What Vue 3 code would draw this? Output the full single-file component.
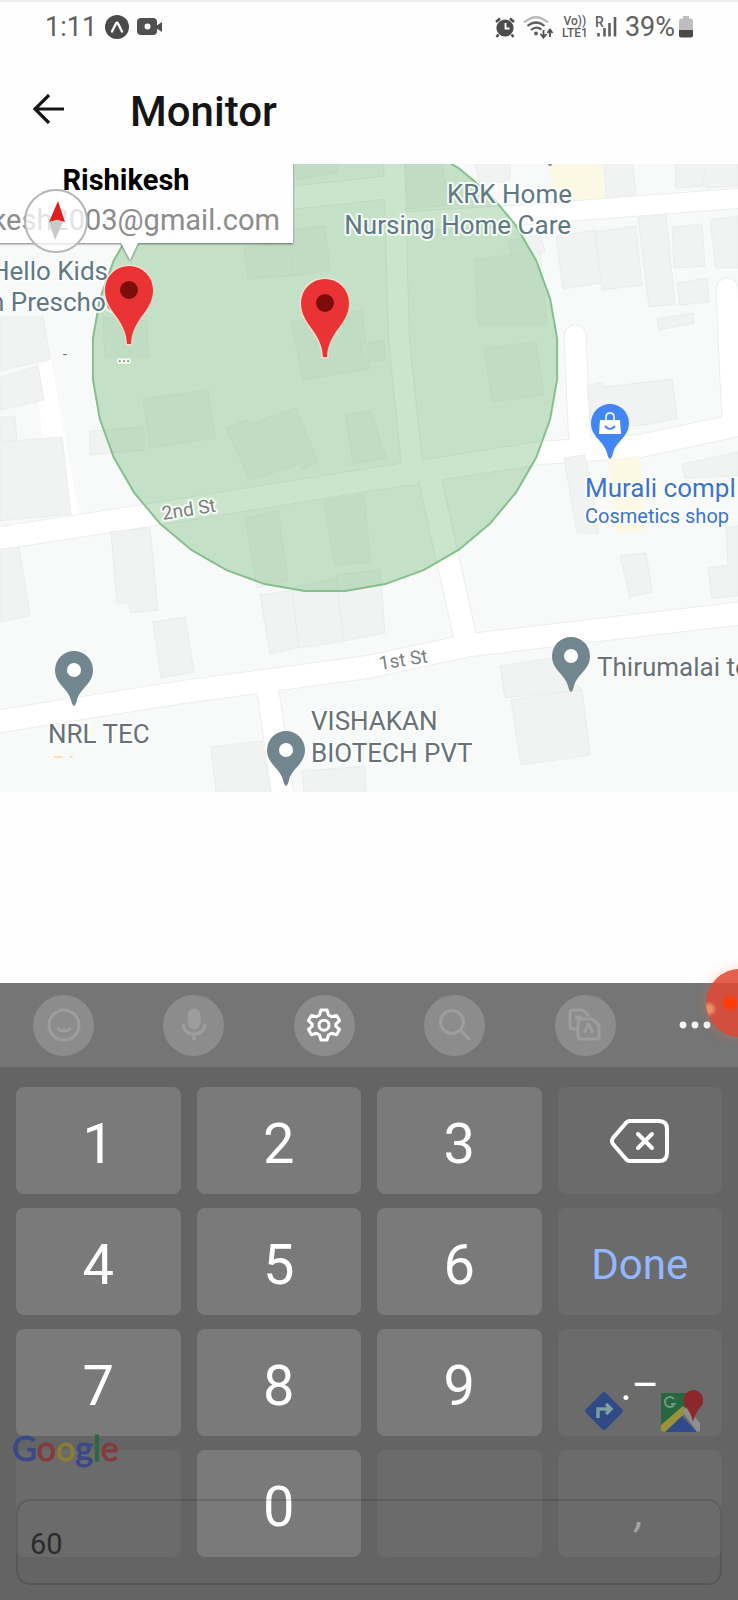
<template>
    <div class="screen">
        <div class="status-bar">
            <div class="status-left">
                <span class="clock">1:11</span>
                <svg width="24" height="24" viewBox="0 0 24 24">
                    <circle cx="12" cy="12" r="12" fill="#4a4a4a" />
                    <path d="M7 16.5 11 8.5Q12 7 13 8.5L17 16.5" fill="none" stroke="#fff" stroke-width="2.4" stroke-linecap="round" />
                </svg>
                <svg width="26" height="18" viewBox="0 0 26 18">
                    <rect x="0" y="0" width="20" height="17" rx="4" fill="#505050" />
                    <path d="M19 8 25 4V14L19 10Z" fill="#505050" />
                    <circle cx="10.5" cy="8.5" r="3" fill="#fff" />
                </svg>
            </div>
            <div class="status-right">
                <svg width="20" height="21" viewBox="0 0 20 21">
                    <circle cx="10" cy="11" r="8.6" fill="#4c4c4c" />
                    <path d="M1 5 5 1.5M19 5 15 1.5M3.5 17.5 1.5 20M16.5 17.5 18.5 20" stroke="#4c4c4c" stroke-width="2.4" />
                    <path d="M10.5 6V11.5H14.5" fill="none" stroke="#fff" stroke-width="1.8" />
                </svg>
                <svg width="31" height="23" viewBox="0 0 31 23">
                    <path d="M1 6.5Q13 -4 25 6.5" fill="none" stroke="#b8b8b8" stroke-width="2.2" />
                    <path d="M4.5 10Q13 3 21.5 10M8 14Q13 9.5 18.5 13.5" fill="none" stroke="#606060" stroke-width="2.2" />
                    <circle cx="13" cy="17.5" r="2" fill="#606060" />
                    <path d="M20.5 14V21M17.5 18 20.5 21.5 23.5 18M27 21V14M24.5 17 27 13.5 29.5 17" fill="none" stroke="#505050" stroke-width="1.8" />
                </svg>
                <span class="volte"><span>Vo))</span><span>LTE1</span></span>
                <span class="signal">
                    <span class="roaming">R</span>
                    <svg width="21" height="20" viewBox="0 0 21 20">
                        <path d="M2.5 16V19.5M8.5 11V19.5M13.5 6V19.5M19 0V19.5" stroke="#606060" stroke-width="2.6" />
                    </svg>
                </span>
                <span class="clock percent">39%</span>
                <svg width="14" height="22" viewBox="0 0 14 22">
                    <path d="M4 0H10V2.5H12Q14 2.5 14 5V14H0V5Q0 2.5 2 2.5H4Z" fill="#bdbdbd" />
                    <path d="M0 14H14V19.5Q14 21.5 12 21.5H2Q0 21.5 0 19.5Z" fill="#484848" />
                </svg>
            </div>
        </div>

        <header class="header">
            <button class="back" aria-label="Back">
                <svg width="32" height="30" viewBox="0 0 32 30">
                    <path d="M16 1 2 15 16 29M2 15H31" fill="none" stroke="#151515" stroke-width="3.2" />
                </svg>
            </button>
            <h1>Monitor</h1>
        </header>

        <svg class="map" viewBox="0 164 738 628" role="img" aria-label="Map">
            <rect x="0" y="164" width="738" height="628" fill="#f7faf9" />

            <g class="road-edge">
                <path v-for="road in roads" :key="road.d" :d="road.d" :stroke-width="road.width + 2" />
            </g>
            <g class="road">
                <path v-for="road in roads" :key="road.d" :d="road.d" :stroke-width="road.width" />
            </g>
            <polygon points="36,366 51,360 79,514 71,515 63,438 42,438" fill="#fff" />
            <polygon v-for="points in buildings" :key="points" :points="points" class="building" />
            <polygon v-for="points in shops" :key="points" :points="points" fill="#fdf8e4" />
            <ellipse cx="58" cy="757" rx="5" ry="1" fill="#fbdcbc" />
            <ellipse cx="71" cy="757" rx="2" ry="1" fill="#fbdcbc" />
            <circle cx="550" cy="164" r="2" fill="#8a8a8a" />

            <polygon :points="fence" class="fence" />

            <text
                v-for="label in labels"
                :key="label.text"
                :x="label.x"
                :y="label.y"
                :text-anchor="label.anchor"
                class="label"
                :class="label.kind"
            >{{ label.text }}</text>
            <text transform="translate(163 520) rotate(-9)" class="label street">2nd St</text>
            <text transform="translate(380 670) rotate(-9)" class="label street">1st St</text>

            <g v-for="pin in places" :key="pin.x" :transform="`translate(${pin.x} ${pin.y})`">
                <path :d="placePath" :fill="pin.color" />
                <template v-if="pin.shop">
                    <path d="M-10 -39H10L11 -25H-11Z" fill="#fff" />
                    <path d="M-4 -38V-42Q-4 -46 0 -46Q4 -46 4 -42V-38" fill="none" stroke="#d5e4ff" stroke-width="2" />
                    <path d="M-5 -33Q0 -27 5 -33" fill="none" stroke="#4285f4" stroke-width="2" />
                </template>
                <circle v-else cx="0" cy="-36" r="7" fill="#fff" />
            </g>

            <g v-for="pin in markers" :key="pin.x" :transform="`translate(${pin.x} ${pin.y})`">
                <path :d="markerPath" class="marker" />
                <circle cx="0" cy="-54" r="9" fill="#7c0d0b" />
            </g>

            <g class="callout">
                <path d="M-20 150H293V243H138L130 260L121 243H-20Z" />
                <text x="126" y="190" text-anchor="middle" class="callout-name">Rishikesh</text>
                <text x="280" y="230" text-anchor="end" class="callout-mail">rishikesh2003@gmail.com</text>
            </g>

            <circle cx="56" cy="221" r="31" class="compass" />
            <path d="M58 201 65 222 57 220 49 222Z" fill="#e02020" />
            <path d="M49 222 57 220 63 222 55 240Z" fill="#c9c9c9" />
        </svg>

        <div class="blank"></div>

        <div class="keyboard">
            <div class="toolbar">
                <button class="tool" aria-label="Emoji">
                    <svg width="34" height="34" viewBox="0 0 34 34">
                        <circle cx="17" cy="17" r="15" />
                        <path d="M10 20Q17 26 24 20" />
                    </svg>
                </button>
                <button class="tool" aria-label="Voice input">
                    <svg width="34" height="34" viewBox="0 0 34 34">
                        <rect x="12" y="2" width="10" height="18" rx="5" class="solid" />
                        <path d="M6 16Q7 26 17 26Q27 26 28 16M17 26V32" />
                    </svg>
                </button>
                <button class="tool active" aria-label="Settings">
                    <svg width="34" height="34" viewBox="0 0 34 34">
                        <path d="M14 2H20L21.5 7L24.5 8.7L29.5 7.4L32.5 12.6L28.8 16.2V18.2L32.5 21.6L29.5 26.8L24.5 25.3L21.5 27L20 32H14L12.5 27L9.5 25.3L4.5 26.8L1.5 21.6L5.2 18.2V16.2L1.5 12.6L4.5 7.4L9.5 8.7L12.5 7Z" />
                        <circle cx="17" cy="17.2" r="5" />
                    </svg>
                </button>
                <button class="tool" aria-label="Search">
                    <svg width="34" height="34" viewBox="0 0 34 34">
                        <circle cx="14" cy="14" r="11.5" />
                        <path d="M22.5 22.5 32 32" />
                    </svg>
                </button>
                <button class="tool" aria-label="Translate">
                    <svg width="34" height="34" viewBox="0 0 34 34">
                        <path d="M10 21H5Q2 21 2 18V5Q2 2 5 2H15L21 8M7 9H14M10.5 9V16" />
                        <path d="M13 11H24L31 17V29Q31 31 28 31H13Q10 31 10 29V14Q10 11 13 11ZM16 25 20.5 16 25 25" />
                    </svg>
                </button>
                <button class="more" aria-label="More">
                    <svg width="32" height="8" viewBox="0 0 32 8">
                        <circle cx="4" cy="4" r="3.4" />
                        <circle cx="16" cy="4" r="3.4" />
                        <circle cx="28" cy="4" r="3.4" />
                    </svg>
                </button>
            </div>

            <div class="keys">
                <button v-for="(key, index) in keys" :key="index" class="key" :class="key.kind" :aria-label="key.name">
                    <svg v-if="key.name === 'Delete'" width="60" height="46" viewBox="0 0 60 46">
                        <path d="M20 3H49Q57 3 57 11V35Q57 43 49 43H20Q17 43 15 40L3 26Q1 23 3 20L15 6Q17 3 20 3Z" stroke-width="4" />
                        <path d="M28 16 42 30M42 16 28 30" stroke-width="4" stroke-linecap="round" />
                    </svg>
                    <template v-else>{{ key.text }}</template>
                </button>
            </div>

            <div class="google">
                <span v-for="(letter, index) in google" :key="index" :class="letter.color">{{ letter.text }}</span>
            </div>
            <div class="map-links">
                <a href="#" aria-label="Directions">
                    <svg width="38" height="38" viewBox="0 0 38 38">
                        <path d="M17 1Q19 -1 21 1L37 17Q39 19 37 21L21 37Q19 39 17 37L1 21Q-1 19 1 17Z" fill="#304a86" />
                        <path d="M13 26V17H25M21 12 26 17 21 22" fill="none" stroke="#7e9ea6" stroke-width="3.4" />
                    </svg>
                </a>
                <a href="#" aria-label="Open in Google Maps">
                    <svg width="44" height="44" viewBox="0 0 44 44">
                        <path d="M2 4H28L30 20L2 42Z" fill="#27673f" />
                        <path d="M2 42V36L24 17L29 22L7 43Z" fill="#9b9136" />
                        <path d="M6 43 23 27 38 43Z" fill="#2f4b89" />
                        <path d="M23 22 28 18 41 34V42L38 43Z" fill="#8d8d92" />
                        <path d="M34 33Q32 24 27 18A10 10 0 1 1 43 16Q36 24 34 33Z" fill="#8c282b" />
                        <path d="M15 10A5 5 0 1 0 15.5 15H12" fill="none" stroke="#709a80" stroke-width="2" />
                    </svg>
                </a>
            </div>
            <input v-model="radius" class="radius" type="text" inputmode="numeric" aria-label="Radius" />
            <div class="recorder"></div>
        </div>
    </div>
</template>
<script setup>
import { ref } from "vue";

const radius = ref("60");

const roads = [
    { d: "M-5 539L150 515L368 480L540 453L640 446L743 424", width: 22 },
    { d: "M290 198L392 187", width: 22 },
    { d: "M398 222L520 215L743 198", width: 19 },
    { d: "M394 160L399 340L413 475", width: 20 },
    { d: "M429 476L467 645", width: 22 },
    { d: "M-5 722L190 691L368 667L470 645L743 613", width: 22 },
    { d: "M267 685L283 795", width: 21 },
    { d: "M575 336L580 448", width: 21 },
    { d: "M727 289L733 425", width: 21 },
];

const buildings = [
    "0,317 43,317 50,359 0,371",
    "0,377 38,366 44,400 0,410",
    "0,417 15,417 17,440 0,443",
    "0,442 62,437 71,514 0,521",
    "90,431 144,427 144,450 90,455",
    "143,399 208,390 215,438 150,448",
    "226,428 247,420 250,424 296,408 318,462 304,469 300,464 250,480",
    "103,317 147,321 148,357 105,357",
    "244,248 287,240 300,275 248,279",
    "290,230 325,226 330,270 292,276",
    "291,322 362,310 369,369 303,380",
    "345,415 371,411 386,458 353,464",
    "360,344 384,340 385,360 362,363",
    "295,164 338,164 338,172 297,180",
    "405,164 442,164 450,205 408,209",
    "475,164 510,164 510,180 480,186",
    "604,164 633,164 636,194 606,198",
    "675,164 702,164 704,186 676,188",
    "704,164 738,164 738,186 706,188",
    "475,260 540,250 547,325 478,325",
    "484,348 536,342 544,395 492,402",
    "508,240 540,235 545,252 512,256",
    "556,236 595,230 601,283 563,289",
    "595,232 636,226 642,285 602,290",
    "672,227 702,224 705,266 674,268",
    "677,283 707,278 709,302 680,305",
    "638,218 666,214 675,304 649,307",
    "710,220 738,216 738,268 716,268",
    "657,319 693,313 694,323 659,330",
    "587,386 602,382 605,387 672,379 677,418 650,424 592,430",
    "564,458 585,455 590,480 599,533 577,533",
    "682,464 738,452 738,476 685,478",
    "620,556 646,553 652,592 630,597",
    "708,568 728,565 726,528 738,526 738,596 712,598",
    "500,666 552,658 582,690 505,698",
    "511,700 582,690 590,755 521,765",
    "324,501 364,495 371,562 335,565",
    "245,518 278,511 288,580 257,588",
    "111,532 150,528 158,610 131,613 129,603 117,603",
    "153,622 185,617 194,672 161,678",
    "0,549 19,547 30,616 0,622",
    "260,595 292,590 299,647 270,654",
    "292,588 336,578 344,641 299,648",
    "336,575 380,570 385,633 344,641",
    "211,747 262,741 270,792 216,792",
    "302,771 365,766 366,792 304,792",
];

const shops = ["550,164 602,164 604,198 552,200", "608,459 640,456 646,530 616,534"];

// geofence drawn as a 36 sided polygon
const fence = Array.from({ length: 36 }, (_, i) => {
    const angle = ((i * 10 + 5) * Math.PI) / 180;
    return `${(325 + 233 * Math.cos(angle)).toFixed(1)},${(359 + 233 * Math.sin(angle)).toFixed(1)}`;
}).join(" ");

const labels = [
    { text: "KRK Home", x: 572, y: 203, anchor: "end", kind: "place" },
    { text: "Nursing Home Care", x: 571, y: 234, anchor: "end", kind: "place" },
    { text: "Hello Kids", x: 108, y: 280, anchor: "end", kind: "place" },
    { text: "n Preschool", x: -10, y: 311, anchor: "start", kind: "place" },
    { text: "Murali compl", x: 585, y: 497, anchor: "start", kind: "shop" },
    { text: "Cosmetics shop", x: 585, y: 523, anchor: "start", kind: "shop small" },
    { text: "Thirumalai te", x: 597, y: 676, anchor: "start", kind: "company" },
    { text: "NRL TEC", x: 48, y: 743, anchor: "start", kind: "company" },
    { text: "VISHAKAN", x: 311, y: 730, anchor: "start", kind: "company" },
    { text: "BIOTECH PVT", x: 311, y: 762, anchor: "start", kind: "company" },
    { text: "...", x: 124, y: 362, anchor: "middle", kind: "tiny" },
    { text: "-", x: 65, y: 360, anchor: "middle", kind: "tiny" },
];

const placePath = "M0 0Q-2 -1 -3 -6C-6 -18 -19 -22 -19 -36A19 19 0 1 1 19 -36C19 -22 6 -18 3 -6Q2 -1 0 0Z";
const places = [
    { x: 74, y: 706, color: "#72868f" },
    { x: 286, y: 786, color: "#72868f" },
    { x: 571, y: 692, color: "#72868f" },
    { x: 610, y: 459, color: "#4285f4", shop: true },
];

const markerPath = "M-2 0C-3 -26 -24 -32 -24 -54A24 24 0 1 1 24 -54C24 -32 3 -26 2 0Z";
const markers = [
    { x: 129, y: 344 },
    { x: 325, y: 357 },
];

const keys = [
    { text: "1" },
    { text: "2" },
    { text: "3" },
    { text: "", kind: "side erase", name: "Delete" },
    { text: "4" },
    { text: "5" },
    { text: "6" },
    { text: "Done", kind: "side done" },
    { text: "7" },
    { text: "8" },
    { text: "9" },
    { text: ".–", kind: "side dash" },
    { text: "", kind: "side", name: "Blank" },
    { text: "0" },
    { text: "", kind: "side", name: "Blank" },
    { text: ",", kind: "side comma" },
];

const google = [
    { text: "G", color: "blue" },
    { text: "o", color: "red" },
    { text: "o", color: "yellow" },
    { text: "g", color: "blue" },
    { text: "l", color: "green" },
    { text: "e", color: "red" },
];
</script>
<style>
body {
    margin: 0;
    background: #fefefe;
}
</style>
<style scoped>
.screen {
    display: flex;
    flex-direction: column;
    min-height: 100vh;
    overflow: hidden;
    font-family: Roboto, "Liberation Sans", sans-serif;
}
button {
    padding: 0;
    border: 0;
    background: none;
    font-family: inherit;
}
svg {
    display: block;
    flex: none;
}

.status-bar {
    display: flex;
    justify-content: space-between;
    align-items: center;
    box-sizing: border-box;
    height: 54px;
    padding: 0 45px 2px;
    border-top: 2px solid #ececec;
    color: #606060;
}
.status-left,
.status-right {
    display: flex;
    align-items: center;
    gap: 8px;
}
.clock {
    font-size: 27px;
    line-height: 32px;
}
.percent {
    margin-right: -4px;
}
.volte {
    display: flex;
    flex-direction: column;
    align-items: center;
    font-size: 12px;
    font-weight: 500;
    line-height: 12px;
}
.signal {
    position: relative;
}
.roaming {
    position: absolute;
    top: -2px;
    left: -1px;
    font-size: 14px;
    font-weight: 500;
    line-height: 14px;
}

.header {
    display: flex;
    align-items: center;
    gap: 65px;
    height: 110px;
    padding: 0 33px;
}
.header h1 {
    margin: 0;
    padding-top: 5px;
    font-size: 42px;
    font-weight: 500;
    line-height: 50px;
    color: #151515;
}

.map {
    width: 100%;
    height: auto;
}
.road-edge {
    fill: none;
    stroke: #eceeed;
    stroke-linecap: round;
}
.road {
    fill: none;
    stroke: #fff;
    stroke-linecap: round;
}
.building {
    fill: #f1f3f2;
    stroke: #ebeded;
    stroke-width: 1;
}
.fence {
    fill: rgba(80, 170, 85, 0.3);
    stroke: #85c08a;
    stroke-width: 2;
}
.label {
    font-size: 26px;
    paint-order: stroke;
    stroke: rgba(255, 255, 255, 0.8);
    stroke-width: 4px;
    stroke-linejoin: round;
}
.place {
    fill: #5f7984;
}
.company {
    fill: #667278;
}
.shop {
    fill: #3b73d1;
}
.small {
    font-size: 20px;
}
.street {
    font-size: 19px;
    fill: #7b7f82;
}
.tiny {
    font-size: 16px;
    fill: #777;
}
.marker {
    fill: #e93335;
    stroke: #fbdccb;
    stroke-width: 3;
    paint-order: stroke;
}
.callout path {
    fill: #fefefe;
    filter: drop-shadow(0 1px 1px rgba(0, 0, 0, 0.5));
}
.callout-name {
    font-size: 29px;
    font-weight: 700;
    fill: #000;
}
.callout-mail {
    font-size: 29px;
    fill: #8c8c8c;
}
.compass {
    fill: rgba(255, 255, 255, 0.75);
    stroke: #b5b5b5;
    stroke-width: 2;
}

.blank {
    flex: 1;
}

.keyboard {
    position: relative;
    background: #646464;
}
.toolbar {
    display: flex;
    justify-content: space-between;
    align-items: center;
    height: 84px;
    padding: 0 33px;
    background: #757575;
}
.tool {
    display: flex;
    align-items: center;
    justify-content: center;
    width: 61px;
    height: 61px;
    border-radius: 50%;
    background: #8c8c8c;
}
.tool svg {
    fill: none;
    stroke: #9d9d9d;
    stroke-width: 3;
    stroke-linejoin: round;
}
.tool .solid {
    fill: #9d9d9d;
}
.tool.active svg {
    stroke: #fff;
}
.more {
    display: flex;
    justify-content: center;
    width: 20px;
}
.more svg {
    fill: #f5f5f5;
}
.keys {
    display: grid;
    grid-template-columns: repeat(4, 1fr);
    grid-auto-rows: 107px;
    gap: 14px 16px;
    padding: 20px 16px 43px;
}
.key {
    display: flex;
    align-items: center;
    justify-content: center;
    padding-top: 6px;
    border-radius: 8px;
    background: #7a7a7a;
    color: #fff;
    font-size: 56px;
    line-height: 64px;
}
.key.side {
    background: #6b6b6b;
}
.key.erase {
    padding-top: 0;
}
.erase svg {
    fill: none;
    stroke: #fff;
}
.key.done {
    font-size: 42px;
    color: #94b8ff;
}
.key.dash {
    font-size: 42px;
}
.key.comma {
    align-items: flex-end;
    padding-bottom: 20px;
    font-size: 42px;
    font-style: italic;
    line-height: 48px;
    color: #a4a4a4;
}

.google {
    position: absolute;
    left: 12px;
    bottom: 130px;
    font-family: Lato, sans-serif;
    font-size: 34px;
    line-height: 44px;
    -webkit-text-stroke: 1px currentColor;
}
.blue {
    color: #3b4889;
}
.red {
    color: #833b3d;
}
.yellow {
    color: #877d33;
}
.green {
    color: #2c6740;
}
.map-links {
    position: absolute;
    right: 35px;
    bottom: 167px;
    display: flex;
    align-items: center;
    gap: 36px;
}
.radius {
    position: absolute;
    left: 16px;
    bottom: 15px;
    box-sizing: border-box;
    width: calc(100% - 32px);
    height: 86px;
    padding: 4px 12px 0;
    border: 2px solid rgba(0, 0, 0, 0.12);
    border-radius: 14px;
    background: none;
    font-family: inherit;
    font-size: 29px;
    color: #2c2c2c;
}
.recorder {
    position: absolute;
    top: -14px;
    right: -36px;
    width: 68px;
    height: 68px;
    border-radius: 50%;
    background:
        radial-gradient(circle at 24px 34px, #ff3c08 5px, rgba(255, 60, 8, 0) 9px),
        radial-gradient(circle at 3px 40px, #ee9066 3px, rgba(238, 144, 102, 0) 8px),
        rgba(222, 74, 52, 0.88);
    box-shadow: 0 0 12px rgba(255, 130, 70, 0.35);
}
</style>
